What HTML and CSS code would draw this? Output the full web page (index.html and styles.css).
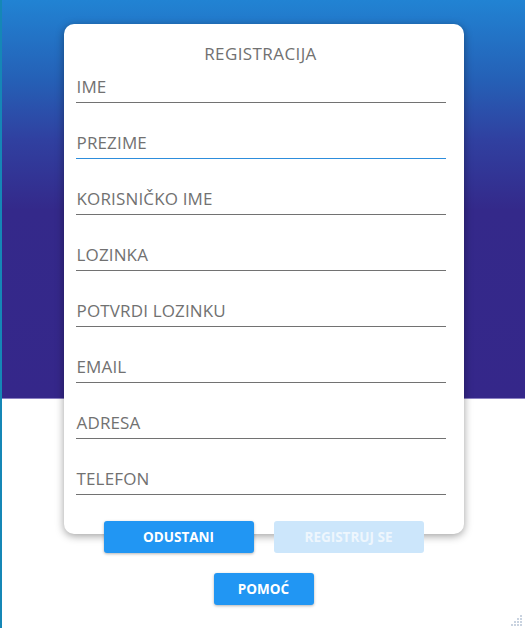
FILE: index.html
```html
<!DOCTYPE html>
<html lang="sr">
<head>
<meta charset="utf-8">
<title>Registracija</title>
<link rel="stylesheet" href="styles.css">
</head>
<body>
<div class="page">
  <form class="card">
    <h1 class="title">REGISTRACIJA</h1>
    <div class="field"><span class="label">IME</span></div>
    <div class="field focused"><span class="label">PREZIME</span></div>
    <div class="field"><span class="label">KORISNIČKO IME</span></div>
    <div class="field"><span class="label">LOZINKA</span></div>
    <div class="field"><span class="label">POTVRDI LOZINKU</span></div>
    <div class="field"><span class="label">EMAIL</span></div>
    <div class="field"><span class="label">ADRESA</span></div>
    <div class="field"><span class="label">TELEFON</span></div>
  </form>
  <div class="actions">
    <button class="btn" type="button">ODUSTANI</button>
    <button class="btn disabled" type="button" disabled>REGISTRUJ SE</button>
  </div>
  <div class="help">
    <button class="btn small" type="button">POMOĆ</button>
  </div>
  <svg class="grip" width="12" height="12" viewBox="0 0 12 12" aria-hidden="true">
    <g fill="#c9d3e0">
      <rect x="9" y="0" width="2" height="2"/>
      <rect x="9" y="3" width="2" height="2"/>
      <rect x="6" y="3" width="2" height="2"/>
      <rect x="9" y="6" width="2" height="2"/>
      <rect x="6" y="6" width="2" height="2"/>
      <rect x="3" y="6" width="2" height="2"/>
      <rect x="9" y="9" width="2" height="2"/>
      <rect x="6" y="9" width="2" height="2"/>
      <rect x="3" y="9" width="2" height="2"/>
      <rect x="0" y="9" width="2" height="2"/>
    </g>
  </svg>
</div>
</body>
</html>
```

FILE: styles.css
```css
html, body {
  margin: 0;
  padding: 0;
  height: 100%;
}
body {
  font-family: "Open Sans", "Liberation Sans", sans-serif;
  background: #ffffff;
}
.page {
  position: relative;
  box-sizing: border-box;
  height: 628px;
  border-left: 2px solid #1587b6;
  padding-top: 24px;
  background:
    linear-gradient(to bottom,
      #2183d3 0px,
      #2560b6 80px,
      #3040a0 140px,
      #34298a 210px,
      #35278a 398px,
      #8a80c2 398px,
      #8a80c2 399px,
      #ffffff 399px,
      #ffffff 100%);
  display: flex;
  flex-direction: column;
  align-items: center;
}
.card {
  box-sizing: border-box;
  width: 400px;
  height: 510px;
  margin: 0;
  background: #ffffff;
  border-radius: 10px;
  box-shadow: 0 2px 9px rgba(0, 0, 0, 0.38);
  padding: 18px 18px 0 12px;
  display: flex;
  flex-direction: column;
}
.title {
  margin: 0 0 9px 0;
  font-size: 17px;
  line-height: 24px;
  font-weight: 400;
  letter-spacing: 0.4px;
  color: #717171;
  text-align: center;
}
.field {
  border-bottom: 1px solid #727272;
  padding-bottom: 3px;
}
.field + .field {
  margin-top: 28px;
}
.field.focused {
  border-bottom-color: #2d8ddc;
}
.label {
  display: block;
  font-size: 17px;
  line-height: 24px;
  letter-spacing: 0.15px;
  color: #717171;
  padding-left: 1px;
}
.actions {
  display: flex;
  gap: 20px;
  margin-top: -13px;
}
.help {
  display: flex;
  margin-top: 20px;
}
.btn {
  width: 150px;
  height: 32px;
  border: none;
  border-radius: 3px;
  background: #2196f3;
  color: #ffffff;
  font-family: "Open Sans", "Liberation Sans", sans-serif;
  font-weight: 700;
  font-size: 13.5px;
  padding: 0;
  box-shadow: 0 1px 3px rgba(0, 0, 0, 0.3);
}
.btn.small {
  width: 100px;
}
.btn.disabled {
  background: #cce6fb;
  color: #eef6fd;
  box-shadow: none;
}
.grip {
  position: absolute;
  right: 2px;
  bottom: 1px;
}
```
